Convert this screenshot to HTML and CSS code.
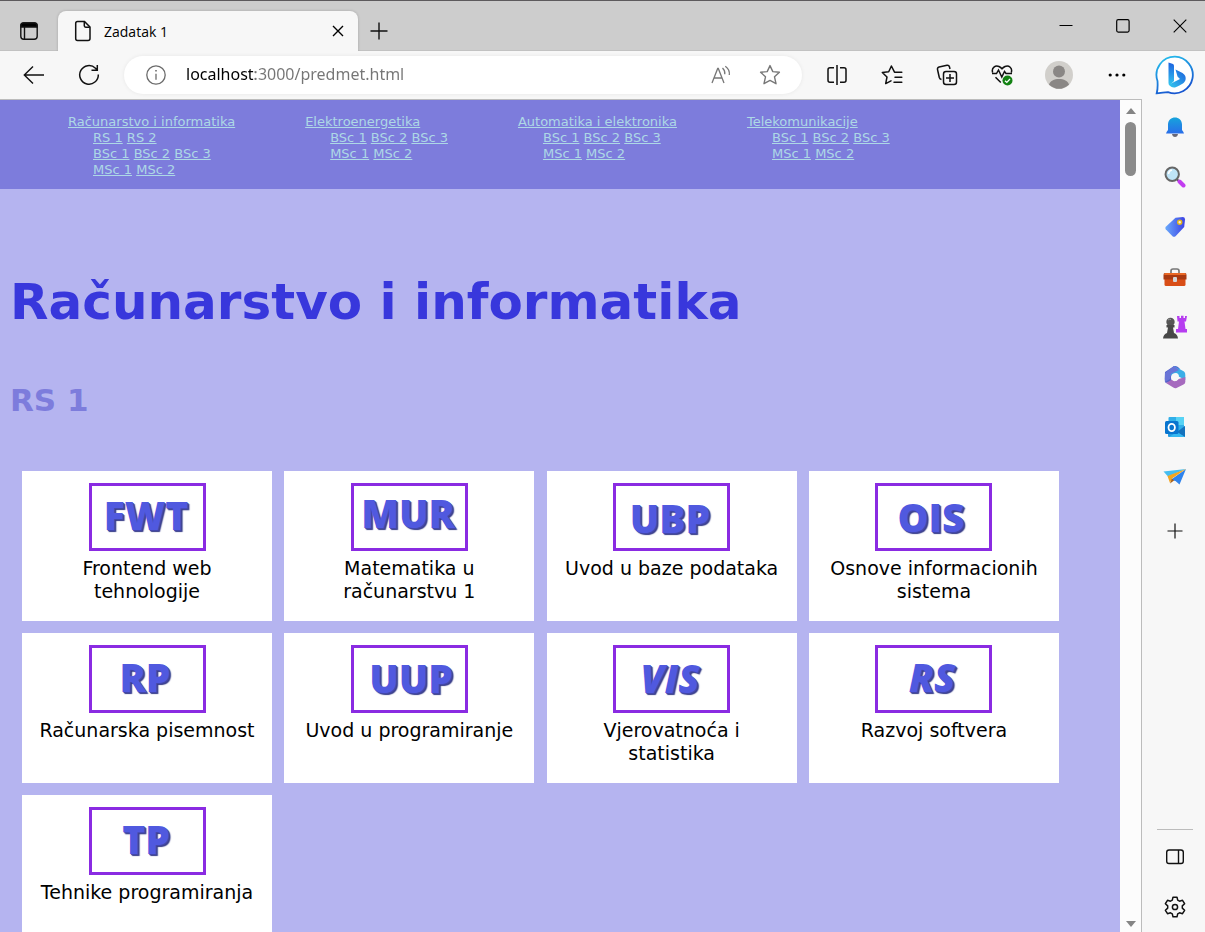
FILE: index.html
```html
<!DOCTYPE html>
<html lang="bs">
<head>
<meta charset="utf-8">
<title>Zadatak 1</title>
<meta name="viewport" content="width=device-width, initial-scale=1">
<link rel="stylesheet" href="styles.css">
</head>
<body>
<header class="titlebar">
  <button class="icon-btn" aria-label="Tab actions"><svg width="20" height="20" viewBox="0 0 20 20" fill="none" stroke="#111" stroke-width="1.4"><rect x="1.8" y="2" width="16.4" height="16.2" rx="3"/><path d="M2 5V4.500Q2 2 4.500 2H15.500Q18 2 18 4.500V6H2z" fill="#000"/><path d="M5.500 6V18"/></svg></button>
  <div class="tab">
    <svg width="18" height="22" viewBox="0 0 18 22" fill="none" stroke="#111" stroke-width="1.5"><path d="M3.500 1.500H10.500L16 7V18.500Q16 20.500 14 20.500H3.500Q1.700 20.500 1.700 18.500V3.500Q1.700 1.500 3.500 1.500z"/><path d="M10.300 1.700V5.800Q10.300 7.200 11.700 7.200H15.800"/></svg>
    <span class="tab-title">Zadatak 1</span>
    <button class="tab-close" aria-label="Close tab"><svg width="12" height="12" viewBox="0 0 12 12" stroke="#000" stroke-width="1.4"><path d="M1 1L11 11M11 1L1 11"/></svg></button>
  </div>
  <button class="icon-btn new-tab" aria-label="New tab"><svg width="18" height="18" viewBox="0 0 18 18" stroke="#111" stroke-width="1.4"><path d="M9 .5V17.500M.5 9H17.500"/></svg></button>
  <div class="window-controls">
    <button class="window-btn" aria-label="Minimize"><svg width="14" height="14" viewBox="0 0 14 14" stroke="#000"><path d="M.5 6.500H13.500"/></svg></button>
    <button class="window-btn" aria-label="Maximize"><svg width="14" height="14" viewBox="0 0 14 14" stroke="#000" stroke-width="1.200" fill="none"><rect x=".7" y=".7" width="12.400" height="12.400" rx="1.500"/></svg></button>
    <button class="window-btn" aria-label="Close"><svg width="14" height="14" viewBox="0 0 14 14" stroke="#000" stroke-width="1.100"><path d="M.7 .7L13.300 13.300M13.300 .7L.7 13.300"/></svg></button>
  </div>
</header>
<div class="frame">
  <div class="main">
    <div class="toolbar">
      <button class="icon-btn" aria-label="Back"><svg width="22" height="20" viewBox="0 0 22 20" fill="none" stroke="#111" stroke-width="1.400"><path d="M21 10H1.500M10 1.500L1.300 10L10 18.500"/></svg></button>
      <button class="icon-btn" aria-label="Refresh"><svg width="22" height="22" viewBox="0 0 22 22" fill="none" stroke="#111" stroke-width="1.500"><path d="M20.300 10.500A9.300 9.300 0 1 1 17.500 4.200L19 5.600M19.300 1V6.300H13.500"/></svg></button>
      <div class="address">
        <svg width="20" height="20" viewBox="0 0 20 20" fill="none" stroke="#6b6b6b" stroke-width="1.300"><circle cx="10" cy="10" r="9.200"/><path d="M10 8.800V14.800"/><path d="M10 5V6.500" stroke-width="1.600"/></svg>
        <input class="url" type="text" aria-label="Address" value="localhost:3000/predmet.html">
        <button class="address-btn" aria-label="Read aloud"><svg width="20" height="20" viewBox="0 0 20 20" fill="none" stroke="#777" stroke-width="1.300"><path d="M1 18L6.700 3.500H7.300L13 18M3 13H11"/><path d="M11.500 3Q14.200 5.500 13.800 9.200M14.300 1.200Q19 4.500 18.300 10"/></svg></button>
        <button class="address-btn" aria-label="Add to favorites"><svg width="22" height="22" viewBox="0 0 22 22" fill="none" stroke="#777" stroke-width="1.400" stroke-linejoin="round"><path d="M11 1.600L13.800 7.600L20.400 8.300L15.500 12.800L17 19.700L11 16.400L5 19.700L6.500 12.800L1.600 8.300L8.200 7.600z"/></svg></button>
      </div>
      <button class="icon-btn" aria-label="Split screen"><svg width="20" height="20" viewBox="0 0 20 20" fill="none" stroke="#111" stroke-width="1.500"><path d="M7 2.800H3Q1 2.800 1 4.800V15.200Q1 17.200 3 17.200H7M13 2.800H17Q19 2.800 19 4.800V15.200Q19 17.200 17 17.200H13M10 0V20"/></svg></button>
      <button class="icon-btn" aria-label="Favorites"><svg width="22" height="20" viewBox="0 0 22 20" fill="none" stroke="#111" stroke-width="1.500" stroke-linejoin="round" stroke-linecap="round"><path d="M20.800 7.200H13.500L10.400 1L7.700 6.800L1.300 7.500L6 12L4.700 18.600L10 15.800M14 12.200H20.800M13 17.200H20.800"/></svg></button>
      <button class="icon-btn" aria-label="Collections"><svg width="22" height="22" viewBox="0 0 22 22" fill="none" stroke="#111" stroke-width="1.500"><rect x="7.500" y="7.500" width="13" height="13" rx="2.500"/><path d="M14 10V18M10 14H18"/><path d="M5.500 15.500Q3.800 15.300 3.300 13.500L1.500 5.500Q1.200 3.500 3.100 3L11 1.300Q13 1 13.500 3L14 5"/></svg></button>
      <button class="icon-btn" aria-label="Browser essentials"><svg width="22" height="22" viewBox="0 0 22 22" fill="none" stroke="#111" stroke-width="1.500"><path d="M1.600 8.500C.2 3.500 4.500 1 8 2.500Q9.800 3.300 11 4.800Q12.200 3.300 14 2.500C18 1 21.700 4 20.300 8.500M4.500 13.200L9.800 18.500M1 9.500H5.500L7.500 6L10.800 13L13.500 7.500L15 9.500H21"/><circle cx="16.500" cy="16.500" r="5" fill="#138213" stroke="none"/><path d="M14 16.700L15.800 18.400L19 15" stroke="#fff" stroke-width="1.300"/></svg></button>
      <button class="icon-btn profile" aria-label="Profile"><svg width="28" height="28" viewBox="0 0 28 28"><circle cx="14" cy="14" r="14" fill="#d1cfcb"/><circle cx="14" cy="10.500" r="6" fill="#8a8785"/><path d="M4 23.700C5.500 16 22.500 16 24 23.700Q14 32 4 23.700z" fill="#8a8785"/></svg></button>
      <button class="icon-btn more" aria-label="Settings and more"><svg width="18" height="4" viewBox="0 0 18 4"><circle cx="2.200" cy="2" r="1.600"/><circle cx="9" cy="2" r="1.600"/><circle cx="15.800" cy="2" r="1.600"/></svg></button>
    </div>
    <div class="view">
      <div class="page">
        <nav class="menu">
          <ul class="menu-group">
            <li><a href="#ri">Računarstvo i informatika</a></li>
            <li class="years"><a href="#rs1">RS 1</a> <a href="#rs2">RS 2</a></li>
            <li class="years"><a href="#ri-b1">BSc 1</a> <a href="#ri-b2">BSc 2</a> <a href="#ri-b3">BSc 3</a></li>
            <li class="years"><a href="#ri-m1">MSc 1</a> <a href="#ri-m2">MSc 2</a></li>
          </ul>
          <ul class="menu-group">
            <li><a href="#ee">Elektroenergetika</a></li>
            <li class="years"><a href="#ee-b1">BSc 1</a> <a href="#ee-b2">BSc 2</a> <a href="#ee-b3">BSc 3</a></li>
            <li class="years"><a href="#ee-m1">MSc 1</a> <a href="#ee-m2">MSc 2</a></li>
          </ul>
          <ul class="menu-group">
            <li><a href="#ae">Automatika i elektronika</a></li>
            <li class="years"><a href="#ae-b1">BSc 1</a> <a href="#ae-b2">BSc 2</a> <a href="#ae-b3">BSc 3</a></li>
            <li class="years"><a href="#ae-m1">MSc 1</a> <a href="#ae-m2">MSc 2</a></li>
          </ul>
          <ul class="menu-group">
            <li><a href="#tk">Telekomunikacije</a></li>
            <li class="years"><a href="#tk-b1">BSc 1</a> <a href="#tk-b2">BSc 2</a> <a href="#tk-b3">BSc 3</a></li>
            <li class="years"><a href="#tk-m1">MSc 1</a> <a href="#tk-m2">MSc 2</a></li>
          </ul>
        </nav>
        <main class="content">
          <h1 class="department" id="ri">Računarstvo i informatika</h1>
          <h2 class="year" id="rs1">RS 1</h2>
          <div class="courses">
            <article class="course"><svg class="badge" viewBox="0 0 111 62"><text x="54" y="44">FWT</text></svg><p>Frontend web tehnologije</p></article>
            <article class="course"><svg class="badge" viewBox="0 0 111 62"><text x="54" y="42">MUR</text></svg><p>Matematika u računarstvu 1</p></article>
            <article class="course"><svg class="badge" viewBox="0 0 111 62"><text x="54" y="47">UBP</text></svg><p>Uvod u baze podataka</p></article>
            <article class="course"><svg class="badge" viewBox="0 0 111 62"><text x="53" y="46">OIS</text></svg><p>Osnove informacionih sistema</p></article>
            <article class="course"><svg class="badge" viewBox="0 0 111 62"><text x="53" y="44">RP</text></svg><p>Računarska pisemnost</p></article>
            <article class="course"><svg class="badge" viewBox="0 0 111 62"><text x="57" y="45">UUP</text></svg><p>Uvod u programiranje</p></article>
            <article class="course"><svg class="badge slanted" viewBox="0 0 111 62"><text x="54" y="45">VIS</text></svg><p>Vjerovatnoća i statistika</p></article>
            <article class="course"><svg class="badge slanted" viewBox="0 0 111 62"><text x="54" y="44">RS</text></svg><p>Razvoj softvera</p></article>
            <article class="course"><svg class="badge" viewBox="0 0 111 62"><text x="54" y="44">TP</text></svg><p>Tehnike programiranja</p></article>
          </div>
        </main>
      </div>
      <div class="scrollbar">
        <svg width="10" height="6" viewBox="0 0 10 6" fill="#858585"><path d="M0 6L5 0L10 6z"/></svg>
        <div class="thumb"></div>
        <svg class="arrow-down" width="10" height="6" viewBox="0 0 10 6" fill="#858585"><path d="M0 0L5 6L10 0z"/></svg>
      </div>
    </div>
  </div>
  <aside class="sidebar">
    <button class="bing" aria-label="Bing"><svg width="40" height="40" viewBox="0 0 40 40"><defs><linearGradient id="bg1" x1="0" y1="0" x2=".4" y2="1"><stop offset="0" stop-color="#25c5ee"/><stop offset="1" stop-color="#1857d0"/></linearGradient><linearGradient id="bg2" x1="0" y1="0" x2="0" y2="1"><stop offset="0" stop-color="#1d62e0"/><stop offset="1" stop-color="#35c9ef"/></linearGradient><linearGradient id="bg3" x1="0" y1="1" x2="1" y2="0"><stop offset="0" stop-color="#35c9ef"/><stop offset="1" stop-color="#1d5fdc"/></linearGradient></defs><path d="M20 1.700A18.300 18.300 0 1 1 13 37.100Q8 37.600 1.700 38.300Q3 33.500 2.500 26A18.300 18.300 0 0 1 20 1.700z" fill="#fff" stroke="url(#bg1)" stroke-width="1.800"/><path d="M20.500 14.500L27.500 18Q31.500 20.500 30.500 25C29.500 28 27 29.500 20 32.500Q16 33 14 29.500L25 24L22.500 21.500Q21.500 18 20.500 14.500z" fill="url(#bg3)"/><path d="M13.500 7.500L18 9Q19 9.500 19 11V26L14.500 30.500Q13.500 29.500 13.500 28z" fill="url(#bg2)"/></svg></button>
    <button class="side-btn" aria-label="Notifications"><svg width="22" height="22" viewBox="0 0 22 22"><path d="M8 18H14Q13.500 21 11 21Q8.500 21 8 18z" fill="#686878"/><path d="M2 17.500Q2.500 15.500 4 14V8.500C4 -1 18 -1 18 8.500V14Q19.500 15.500 20 17.500z" fill="url(#bell)"/><defs><linearGradient id="bell" x1="0" y1="0" x2="0" y2="1"><stop stop-color="#16a4dc"/><stop offset="1" stop-color="#296de9"/></linearGradient></defs></svg></button>
    <button class="side-btn" aria-label="Search"><svg width="22" height="22" viewBox="0 0 22 22"><path d="M12.500 13L16 16" stroke="#555" stroke-width="2"/><path d="M15.500 15.500L19.500 19.500" stroke="#c23df0" stroke-width="4" stroke-linecap="round"/><circle cx="8.200" cy="8.200" r="6.700" fill="#bfe4f7" stroke="#666" stroke-width="2"/><path d="M4.500 8Q4.800 4.500 8 4" fill="none" stroke="#fff" stroke-width="1.500"/></svg></button>
    <button class="side-btn" aria-label="Shopping"><svg width="22" height="22" viewBox="0 0 22 22"><defs><linearGradient id="tag"><stop stop-color="#6aaafb"/><stop offset="1" stop-color="#3b42e4"/></linearGradient></defs><path d="M11.500 1.800L19 1Q21.200 1 21 3.500L20.200 11L11.500 20.200Q10 21.500 8.500 20.200L1.700 13.300Q.7 12 1.800 10.800z" fill="url(#tag)"/><circle cx="15.700" cy="6.200" r="2" fill="#f5efe0" stroke="#e3b419" stroke-width="1.500"/></svg></button>
    <button class="side-btn" aria-label="Tools"><svg width="24" height="20" viewBox="0 0 24 20"><path d="M8 6V4Q8 2 10 2H14Q16 2 16 4V6" fill="none" stroke="#777" stroke-width="1.700"/><rect x="1.500" y="9" width="21" height="10" rx="1.500" fill="#d94e17"/><path d="M2 6H22Q23.500 6 23.500 8V12.500H.5V8Q.5 6 2 6z" fill="#a93a12"/><path d="M2 6H22L23 8H1z" fill="#e96825"/><rect x="10" y="10" width="4" height="5" rx="1" fill="#d4d6d8"/></svg></button>
    <button class="side-btn" aria-label="Games"><svg width="24" height="24" viewBox="0 0 24 24"><path d="M14 1H16.500V3H18V.7H20.500V3H22V1H24L23 6.500H21.500L22.500 14H24V17.500H13V14H15L16 6.500H14.500z" fill="#b63df0"/><circle cx="7.500" cy="7" r="4.200" fill="#555"/><path d="M3.500 10H11.500V12.500H10L11 18Q14.500 19 15 23.500H0Q.5 19 4 18L5 12.500H3.500z" fill="#484848"/><path d="M5 5Q6.500 3.700 8 4.500" stroke="#999" fill="none"/></svg></button>
    <button class="side-btn" aria-label="Microsoft 365"><svg width="22" height="24" viewBox="0 0 22 24"><path d="M1 7L10 1Q12 .5 14 2L16 4L9 8L7 12L7.500 16L2 18Q.5 17 .7 14z" fill="#5462c9"/><path d="M10 1L20 6.500Q21.500 7.500 21.300 10V15L14.700 11.500Q15 8 11.500 8L6 11z" fill="#3aaee7"/><path d="M10 1L15 5L7 9L6 14L1 17V8z" fill="#6a75d7"/><path d="M21.300 12V17Q21.300 18.500 19.500 19.500L12.500 23Q11 23.600 9.300 22.600L2 18L7.700 14.800Q11 18 14.700 14z" fill="#a66abe"/><circle cx="11" cy="12" r="3.700" fill="#f7f7f7"/></svg></button>
    <button class="side-btn" aria-label="Outlook"><svg width="22" height="22" viewBox="0 0 22 22"><rect x="4.500" y="1" width="15.500" height="17" rx="1" fill="#31afe9"/><path d="M12 1H20V9H12z" fill="#57d3f5"/><path d="M4 11L13 16L21 10V21H5Q4 21 4 20z" fill="#249ae0"/><path d="M13 16L21 10V21z" fill="#1472bd"/><path d="M5 21L13 16L21 21z" fill="#35b8f1"/><rect x="1" y="5" width="13.500" height="13" rx="1.500" fill="#0875cf"/><ellipse cx="7.700" cy="11.500" rx="3.200" ry="3.600" fill="none" stroke="#fff" stroke-width="1.800"/></svg></button>
    <button class="side-btn" aria-label="Drop"><svg width="24" height="20" viewBox="0 0 24 20"><path d="M.5 4.500L23 2L5 9.500z" fill="#45bdf0"/><path d="M23 2L16.500 17.500L12.500 14L7.500 13z" fill="#2f83ec"/><path d="M23 2L4.500 9L7 16L9 11.500z" fill="#f4a51f"/><path d="M9 11.500L7 16.500L11 13.500z" fill="#a65c16"/></svg></button>
    <button class="side-btn customize" aria-label="Customize sidebar"><svg width="16" height="16" viewBox="0 0 16 16" stroke="#111" stroke-width="1.200"><path d="M8 .5V15.500M.5 8H15.500"/></svg></button>
    <div class="side-foot">
      <button class="side-btn" aria-label="Hide sidebar"><svg width="20" height="18" viewBox="0 0 20 18" fill="none" stroke="#111" stroke-width="1.400"><rect x="1.700" y="2" width="16.600" height="13.500" rx="2.300"/><path d="M13.500 2V15.500"/></svg></button>
      <button class="side-btn" aria-label="Settings"><svg width="22" height="22" viewBox="0 0 22 22" fill="none" stroke="#111" stroke-width="1.500" stroke-linejoin="round"><path d="M9 1.200H13L13.700 4.200L15.500 5.200L18.500 4.300L20.600 7.700L18.300 9.900V12.100L20.600 14.300L18.500 17.700L15.500 16.800L13.700 17.800L13 20.800H9L8.300 17.800L6.500 16.800L3.500 17.700L1.400 14.300L3.700 12.100V9.900L1.400 7.700L3.500 4.300L6.500 5.200L8.300 4.200z"/><circle cx="11" cy="11" r="2.600"/></svg></button>
    </div>
  </aside>
</div>
</body>
</html>
```
FILE: styles.css
```css
* {
  box-sizing: border-box;
}

body {
  margin: 0;
  height: 100vh;
  display: flex;
  flex-direction: column;
  overflow: hidden;
  background: #f7f7f7;
  font-family: "Open Sans", "Noto Sans", sans-serif;
}

button {
  display: flex;
  align-items: center;
  justify-content: center;
  flex: none;
  padding: 0;
  border: 0;
  background: none;
}

svg {
  display: block;
  flex: none;
}

.icon-btn {
  width: 40px;
  height: 40px;
}

/* Tab strip */
.titlebar {
  display: flex;
  align-items: flex-start;
  height: 51px;
  padding: 10px 0 0 9px;
  border-top: 1px solid #5d5a5d;
  border-bottom: 1px solid #c2c2c2;
  background: #cdcdcd;
}

.tab {
  display: flex;
  align-items: center;
  width: 300px;
  height: 40px;
  margin: 0 1px 0 9px;
  padding: 0 14px 0 16px;
  border-radius: 8px 8px 0 0;
  background: #f7f7f7;
  box-shadow: 0 0 3px #0003;
  clip-path: inset(-4px -4px 0 -4px);
}

.tab-title {
  flex: 1;
  padding-left: 12px;
  font-size: 14px;
}

.tab-close {
  width: 12px;
  height: 20px;
}

.window-controls {
  display: flex;
  gap: 7px;
  margin-left: auto;
}

.window-btn {
  width: 50px;
  height: 30px;
}

/* Toolbar */
.frame {
  display: flex;
  flex: 1;
  min-height: 0;
}

.main {
  display: flex;
  flex-direction: column;
  flex: 1;
  min-width: 0;
}

.toolbar {
  display: flex;
  align-items: center;
  gap: 15px;
  height: 48px;
  padding: 0 5px 0 14px;
}

.address {
  display: flex;
  align-items: center;
  flex: 1;
  min-width: 0;
  height: 38px;
  padding: 0 12px 0 22px;
  border-radius: 19px;
  background: #fff;
  box-shadow: 0 0 4px #0001;
}

.url {
  flex: 1;
  min-width: 0;
  height: 34px;
  padding: 0 0 2px 20px;
  border: 0;
  outline: 0;
  font-family: "Noto Sans", "Open Sans", sans-serif;
  font-size: 16px;
  color: transparent;
  background: linear-gradient(90deg, #000 89px, #757575 89px);
  background-clip: text;
  caret-color: #000;
}

.address-btn {
  width: 40px;
  height: 36px;
  margin-left: 9px;
}

.profile {
  margin-left: 2px;
}

.more {
  margin-left: 3px;
}

/* Viewport */
.view {
  display: flex;
  flex: 1;
  min-height: 0;
  border-top: 1px solid #bcbcbc;
  border-right: 1px solid #bcbcbc;
}

.page {
  flex: 1;
  min-width: 0;
  overflow: hidden;
  background: #b5b4f0;
  color: #000;
  font-family: Verdana, "DejaVu Sans", sans-serif;
}

.scrollbar {
  display: flex;
  flex-direction: column;
  align-items: center;
  width: 21px;
  padding: 8px 0 5px;
  background: #fcfcfc;
}

.thumb {
  width: 11px;
  height: 54px;
  margin-top: 8px;
  border-radius: 6px;
  background: #8b8b8b;
}

.arrow-down {
  margin-top: auto;
}

/* Department menu */
.menu {
  display: flex;
  gap: 70px;
  padding: 14px 68px 11px;
  background: #7d7cdc;
  font-size: 13px;
  line-height: 16px;
  white-space: nowrap;
}

.menu-group {
  margin: 0;
  padding: 0;
  list-style: none;
}

.years {
  padding-left: 25px;
}

.menu a {
  color: #add8e6;
}

/* Course list */
.content {
  padding: 83px 61px 0 10px;
}

.department {
  margin: 0;
  color: #3837dc;
  font-size: 50px;
  line-height: 60px;
}

.year {
  margin: 47px 0 50px;
  color: #7d7cdc;
  font-size: 31px;
  line-height: 42px;
}

.courses {
  display: grid;
  grid-template-columns: repeat(auto-fill, 250px);
  justify-content: space-between;
  gap: 12px;
  padding-left: 12px;
}

.course {
  min-height: 150px;
  padding: 12px;
  background: #fff;
  font-size: 19px;
  line-height: 23px;
  text-align: center;
}

.course p {
  margin: 6px 0 0;
}

.badge {
  width: 117px;
  height: 68px;
  margin: 0 auto;
  border: 3px solid #8a2be2;
}

.badge text {
  fill: #5059df;
  font-family: "Open Sans", "Noto Sans", sans-serif;
  font-size: 39px;
  font-weight: 800;
  text-anchor: middle;
  text-shadow: 1px 1px 0 #4247ab, 2px 2px 1px #363b88;
}

.slanted text {
  font-style: italic;
}

/* Browser sidebar */
.sidebar {
  display: flex;
  flex-direction: column;
  align-items: center;
  width: 63px;
  padding: 4px 0 0 3px;
}

.bing {
  width: 40px;
  height: 40px;
  margin-bottom: 7px;
}

.side-btn {
  width: 36px;
  height: 50px;
}

.customize {
  margin-top: 4px;
}

.side-foot {
  margin-top: auto;
  padding-top: 2px;
  border-top: 1px solid #bcbcbc;
}
```
